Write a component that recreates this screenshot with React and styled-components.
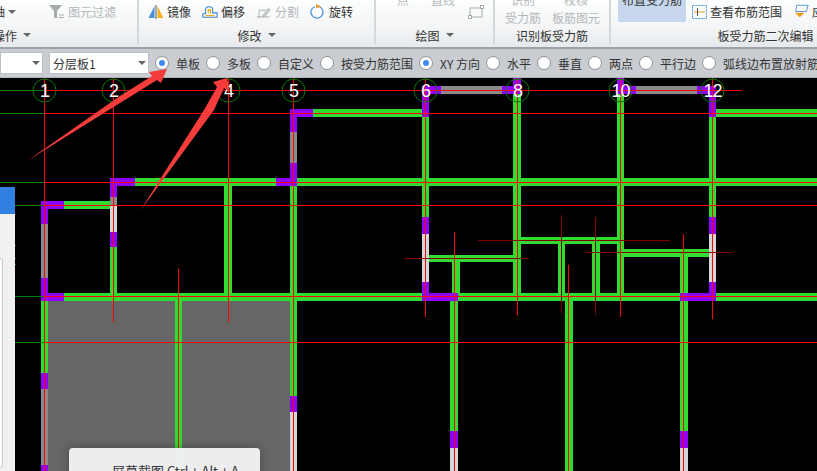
import React from 'react';
import styled, { createGlobalStyle } from 'styled-components';

const GREEN = '#2fdc2f';
const PURPLE = '#8f00ff';
const GRAY = '#8a8a8a';
const LIGHT = '#d6d6d6';
const RED = '#ff0000';
const DARKRED = '#800000';
const GRID = '#008000';

// [x, y, w, h, colour] in page coordinates
const walls = [
  [48, 301, 242, 170, '#666666'],
  // horizontal
  [110, 178, 707, 8, GREEN],
  [41, 293, 776, 8, GREEN],
  [63, 201, 48, 8, GREEN],
  [290, 109, 135, 8, GREEN],
  [716, 109, 101, 8, GREEN],
  [426, 255, 88, 7, GREEN],
  [513, 237, 108, 7, GREEN],
  [620, 249, 90, 8, GREEN],
  // axis 1
  [41, 201, 7, 23, PURPLE],
  [41, 224, 7, 54, GRAY],
  [41, 278, 7, 23, PURPLE],
  [41, 301, 7, 72, GREEN],
  [41, 373, 7, 16, PURPLE],
  [41, 389, 7, 76, GRAY],
  [41, 465, 7, 6, PURPLE],
  [41, 201, 23, 8, PURPLE],
  [41, 293, 23, 8, PURPLE],
  // axis 2
  [110, 197, 7, 8, GRAY],
  [110, 205, 7, 27, LIGHT],
  [110, 178, 7, 19, PURPLE],
  [110, 232, 7, 15, PURPLE],
  [110, 247, 7, 46, GREEN],
  [110, 178, 25, 8, PURPLE],
  // axis 3 and 4
  [175, 301, 7, 170, GREEN],
  [224, 186, 8, 107, GREEN],
  // axis 5
  [290, 109, 7, 23, PURPLE],
  [290, 132, 7, 31, GRAY],
  [290, 163, 7, 23, PURPLE],
  [290, 186, 7, 210, GREEN],
  [290, 396, 7, 16, PURPLE],
  [290, 412, 7, 59, LIGHT],
  [290, 109, 23, 8, PURPLE],
  [276, 178, 21, 8, PURPLE],
  // axis 6
  [422, 117, 7, 100, GREEN],
  [422, 86, 7, 31, PURPLE],
  [422, 217, 7, 17, PURPLE],
  [422, 234, 7, 48, LIGHT],
  [422, 282, 7, 19, PURPLE],
  [422, 293, 36, 8, PURPLE],
  [422, 86, 19, 8, PURPLE],
  [441, 86, 61, 8, GRAY],
  [502, 86, 19, 8, PURPLE],
  // stubs between 6 and 8
  [452, 258, 8, 35, GREEN],
  [450, 301, 8, 130, GREEN],
  [450, 431, 8, 17, PURPLE],
  [450, 448, 8, 23, LIGHT],
  // axis 8
  [513, 78, 8, 16, PURPLE],
  [513, 94, 8, 199, GREEN],
  [558, 237, 7, 56, GREEN],
  [592, 237, 8, 56, GREEN],
  [565, 301, 8, 170, GREEN],
  // axis 10
  [617, 78, 7, 16, PURPLE],
  [617, 94, 7, 199, GREEN],
  [617, 86, 19, 8, PURPLE],
  [636, 86, 61, 8, GRAY],
  [697, 86, 19, 8, PURPLE],
  [680, 252, 8, 41, GREEN],
  [680, 301, 8, 130, GREEN],
  [680, 431, 8, 17, PURPLE],
  [680, 448, 8, 23, LIGHT],
  // axis 12
  [709, 86, 7, 31, PURPLE],
  [709, 117, 7, 100, GREEN],
  [709, 217, 7, 17, PURPLE],
  [709, 234, 7, 48, LIGHT],
  [709, 282, 7, 19, PURPLE],
  [680, 293, 36, 8, PURPLE],
];

// [x1, y1, x2, y2, colour]
const lines = [
  [0, 90, 44, 90, GRID],
  [0, 113, 44, 113, GRID],
  [0, 182, 44, 182, GRID],
  [15, 205, 44, 205, GRID],
  [15, 296, 44, 296, GRID],
  [15, 342, 44, 342, GRID],
  [15, 245, 16, 245, GRID],
  [15, 258, 16, 258, GRID],
  [15, 264, 16, 264, GRID],
  [44, 90, 742, 90, RED],
  [44, 113, 817, 113, RED],
  [44, 182, 817, 182, RED],
  [44, 205, 817, 205, RED],
  [44, 296, 817, 296, RED],
  [44, 342, 817, 342, RED],
  [44, 78, 44, 471, RED],
  [113, 78, 113, 322, RED],
  [228, 78, 228, 322, RED],
  [293, 78, 293, 471, RED],
  [425, 78, 425, 317, RED],
  [517, 78, 517, 315, RED],
  [620, 78, 620, 317, RED],
  [712, 78, 712, 319, RED],
  [178, 269, 178, 471, RED],
  [454, 232, 454, 471, RED],
  [568, 265, 568, 471, RED],
  [683, 234, 683, 471, RED],
  [561, 215, 561, 313, DARKRED],
  [595, 218, 595, 315, DARKRED],
  [478, 240, 670, 240, DARKRED],
  [586, 252, 733, 252, DARKRED],
  [404, 258, 529, 258, DARKRED],
];

const axes = [
  [44.5, '1'], [113.5, '2'], [228.5, '4'], [293.5, '5'],
  [425.5, '6'], [517.5, '8'], [620.5, '10'], [712.5, '12'],
];

const options = [
  ['单板', true], ['多板'], ['自定义'], ['按受力筋范围'], ['XY 方向', true],
  ['水平'], ['垂直'], ['两点'], ['平行边'], ['弧线边布置放射筋'],
];

const Global = createGlobalStyle`
  html, body { margin: 0; padding: 0; background: #000; overflow: hidden; }
  #root { width: 817px; height: 471px; }
`;

const Page = styled.div`
  position: relative;
  width: 817px;
  height: 471px;
  display: flex;
  flex-direction: column;
  overflow: hidden;
  font-family: "Noto Sans CJK SC", "Liberation Sans", sans-serif;
  font-size: 12px;
  color: #333;
`;

const Ribbon = styled.div`
  flex: 0 0 47px;
  display: flex;
  overflow: hidden;
  background: linear-gradient(#fdfefe, #f3f5f6 60%, #e6e9ec);
  border-bottom: 2px solid #9ea2a7;
`;

const Group = styled.div`
  flex: 0 0 ${p => p.$width}px;
  box-sizing: border-box;
  display: flex;
  flex-direction: column;
  justify-content: flex-end;
  border-right: ${p => (p.$last ? 'none' : '2px solid #d5d8db')};
  margin-bottom: 3px;
`;

const Tools = styled.div`
  flex: 1;
  min-height: 0;
  box-sizing: border-box;
  display: flex;
  align-items: center;
  gap: ${p => p.$gap || 0}px;
  padding: 0 0 3px ${p => p.$pad || 0}px;
`;

const Tool = styled.div`
  flex: none;
  display: flex;
  align-items: center;
  justify-content: space-between;
  gap: ${p => p.$gap ?? 3}px;
  width: ${p => (p.$width ? `${p.$width}px` : 'auto')};
  margin-left: ${p => p.$left || 0}px;
  white-space: nowrap;
  line-height: 16px;
  color: ${p => (p.$off ? '#b4b7ba' : '#333')};
`;

const Stacked = styled.div`
  flex: none;
  width: ${p => p.$width}px;
  align-self: flex-end;
  margin-bottom: ${p => p.$lift}px;
  text-align: center;
  line-height: 18px;
  color: #b4b7ba;
  white-space: nowrap;
`;

const Selected = styled.div`
  flex: none;
  width: 68px;
  height: 23px;
  margin-top: -1px;
  align-self: flex-start;
  display: flex;
  justify-content: center;
  line-height: 12px;
  overflow: hidden;
  background: #c6d6ec;
  white-space: nowrap;
`;

const SelectedText = styled.span`
  margin-top: -5px;
`;

const GroupLabel = styled.div`
  height: 18px;
  line-height: 17px;
  display: flex;
  align-items: center;
  justify-content: ${p => (p.$start ? 'flex-start' : 'center')};
  gap: 6px;
  margin-left: ${p => p.$left || 0}px;
  white-space: nowrap;
`;

const Caret = styled.i`
  flex: none;
  width: 0;
  height: 0;
  border-left: 4px solid transparent;
  border-right: 4px solid transparent;
  border-top: 4px solid #666;
`;

const OptionBar = styled.div`
  flex: 0 0 29px;
  box-sizing: border-box;
  display: flex;
  align-items: center;
  background: #c9cdd2;
  border-bottom: 1px solid #b0b3b7;
  white-space: nowrap;
  overflow: hidden;
`;

const Select = styled.div`
  box-sizing: border-box;
  flex: 0 0 ${p => p.$width}px;
  height: 22px;
  margin-right: 6px;
  padding: 0 2px 0 3px;
  display: flex;
  align-items: center;
  justify-content: space-between;
  background: #fff;
  border: 1px solid #bdbfc2;
`;

const Option = styled.label`
  display: flex;
  align-items: center;
  gap: 7px;
  margin-right: 6px;
  flex: none;
`;

const Radio = styled.span`
  box-sizing: border-box;
  flex: none;
  width: 14px;
  height: 14px;
  border-radius: 50%;
  background: #fff;
  border: 1px solid #8f9296;
  display: flex;
  align-items: center;
  justify-content: center;

  &::after {
    content: '';
    display: ${p => (p.$on ? 'block' : 'none')};
    width: 6px;
    height: 6px;
    border-radius: 50%;
    background: #3b8cf2;
  }
`;

const Canvas = styled.div`
  position: relative;
  flex: 1;
  background: #000;
  overflow: hidden;
`;

const Drawing = styled.svg`
  display: block;
  width: 817px;
  height: 394px;
`;

const AxisLabel = styled.text`
  font-family: "Liberation Sans", sans-serif;
  font-size: 18px;
  letter-spacing: -1px;
  fill: #fff;
  text-anchor: middle;
`;

const SidePanel = styled.div`
  position: absolute;
  left: 0;
  top: 109px;
  bottom: 0;
  width: 15px;
  background: #f0f0f0;

  &::before {
    content: '';
    display: block;
    height: 27px;
    background: #2f80e0;
  }
  &::after {
    content: '';
    position: absolute;
    left: -1px;
    top: 71px;
    bottom: 3px;
    width: 2px;
    border: 1px solid #c8c8d2;
    border-radius: 0 2px 2px 0;
    background: #fff;
  }
`;

const Tip = styled.div`
  position: absolute;
  left: 69px;
  top: 370px;
  width: 191px;
  height: 60px;
  box-sizing: border-box;
  padding: 14px 0 0 43px;
  border-radius: 4px;
  background: rgba(242, 243, 245, 0.96);
  box-shadow: 0 0 10px rgba(0, 0, 0, 0.3);
  font-size: 13px;
  line-height: 18px;
  color: #333;
  white-space: nowrap;
`;

const Arrows = styled.svg`
  position: absolute;
  left: 0;
  top: 0;
  width: 817px;
  height: 471px;
  pointer-events: none;
`;

const FilterIcon = () => (
  <svg width="16" height="15" viewBox="0 0 16 15">
    <path d="M0 1h13L8 7v7H5V7z" fill="#a8abae" />
    <path d="M10 11h5M10 13.500h5" stroke="#a8abae" />
  </svg>
);

const MirrorIcon = () => (
  <svg width="16" height="14" viewBox="0 0 16 14">
    <path d="M6.500 1v12H0.500z" fill="#4a8fdc" />
    <path d="M9.500 1v12h6z" fill="#f5b21c" />
    <path d="M8 0v14" stroke="#555" />
  </svg>
);

const OffsetIcon = () => (
  <svg width="17" height="14" viewBox="0 0 18 14" fill="none">
    <path d="M1 13V9h3V4q0-3 4-3t4 3v4h5v5z" stroke="#3d86d8" strokeWidth="1.2" />
    <path d="M4 11h10M7 8V4.500h2.500V9" stroke="#f0a81e" strokeWidth="1.4" />
  </svg>
);

const SplitIcon = () => (
  <svg width="18" height="14" viewBox="0 0 18 14" fill="none" stroke="#a8abae">
    <path d="M1 12.500h14M3.500 5v9M3.500 5h8" />
    <path d="M7 12l7-9 2 1.500-7 8.500z" fill="#d0d2d4" />
  </svg>
);

const RotateIcon = () => (
  <svg width="15" height="15" viewBox="0 0 15 15" fill="none">
    <path d="M5 2.500a6 6 0 1 0 4 0" stroke="#4a8fdc" strokeWidth="1.300" />
    <path d="M6 0l5 2.200-5 2.300z" fill="#f09a20" />
  </svg>
);

const RectIcon = () => (
  <svg width="16" height="14" viewBox="0 0 16 14" fill="none">
    <rect x="2" y="3" width="12" height="9" stroke="#a8abae" />
    <rect x="0.500" y="10.500" width="3" height="3" fill="#fff" stroke="#a8abae" />
    <rect x="12.500" y="0.500" width="3" height="3" fill="#fff" stroke="#a8abae" />
  </svg>
);

const RangeIcon = () => (
  <svg width="15" height="14" viewBox="0 0 15 14" fill="none">
    <rect x="0.500" y="0.500" width="14" height="13" stroke="#4a8fdc" strokeDasharray="2 1" />
    <path d="M2 7h11" stroke="#f09a20" />
    <path d="M5.500 3v8" stroke="#555" />
  </svg>
);

const ApplyIcon = () => (
  <svg width="15" height="17" viewBox="0 0 17 17" fill="none">
    <path d="M3 1.500h13l-2 7H2z" stroke="#4a8fdc" />
    <path d="M1 10h11l-5.500 5z" fill="#f09a20" />
  </svg>
);

export default function App() {
  return (
    <Page>
      <Global />
      <Ribbon>
        <Group $width={139}>
          <Tools $gap={33}>
            <Tool $left={-7}>轴<Caret /></Tool>
            <Tool $off><FilterIcon />图元过滤</Tool>
          </Tools>
          <GroupLabel $start $left={-7}>操作<Caret /></GroupLabel>
        </Group>
        <Group $width={237}>
          <Tools $pad={9} $gap={11}>
            <Tool $width={43}><MirrorIcon />镜像</Tool>
            <Tool $width={43}><OffsetIcon />偏移</Tool>
            <Tool $width={43} $off><SplitIcon />分割</Tool>
            <Tool $width={43}><RotateIcon />旋转</Tool>
          </Tools>
          <GroupLabel>修改<Caret /></GroupLabel>
        </Group>
        <Group $width={119}>
          <Tools $gap={8} $pad={12}>
            <Stacked $width={30} $lift={14}>点</Stacked>
            <Stacked $width={34} $lift={14}>直线</Stacked>
            <RectIcon />
          </Tools>
          <GroupLabel>绘图<Caret /></GroupLabel>
        </Group>
        <Group $width={116}>
          <Tools $gap={6} $pad={6}>
            <Stacked $width={44} $lift={-4}>识别<br />受力筋</Stacked>
            <Stacked $width={50} $lift={-4}>校核<br />板筋图元</Stacked>
          </Tools>
          <GroupLabel>识别板受力筋</GroupLabel>
        </Group>
        <Group $width={206} $last>
          <Tools $gap={6} $pad={7}>
            <Selected><SelectedText>布置受力筋</SelectedText></Selected>
            <Tool><RangeIcon />查看布筋范围</Tool>
            <Tool $left={6}><ApplyIcon />应用</Tool>
          </Tools>
          <GroupLabel $left={84}>板受力筋二次编辑</GroupLabel>
        </Group>
      </Ribbon>

      <OptionBar>
        <Select $width={43}><span /><Caret /></Select>
        <Select $width={100}>分层板1<Caret /></Select>
        {options.map(([text, on]) => (
          <Option key={text}><Radio $on={on} />{text}</Option>
        ))}
      </OptionBar>

      <Canvas>
        <Drawing viewBox="0 78 817 394" shapeRendering="crispEdges">
          {walls.map(([x, y, w, h, c], i) => (
            <rect key={i} x={x} y={y} width={w} height={h} fill={c} />
          ))}
          {lines.map(([x1, y1, x2, y2, c], i) => (
            <rect
              key={i}
              x={x1}
              y={y1}
              width={Math.max(x2 - x1, 1)}
              height={Math.max(y2 - y1, 1)}
              fill={c}
            />
          ))}
          {axes.map(([x, label]) => (
            <g key={label} shapeRendering="auto">
              <circle cx={x} cy={90.5} r={11.5} fill="none" stroke="#0a7a0a" />
              <AxisLabel x={x} y={97}>{label}</AxisLabel>
            </g>
          ))}
        </Drawing>
        <SidePanel />
        <Tip>屏幕截图 Ctrl + Alt + A</Tip>
      </Canvas>

      <Arrows viewBox="0 0 817 471">
        <path d="M27 161L120 96 152 76 149 72 167 69 161 83 157 80 120 103z" fill="#f73c3c" />
        <path d="M140 211L204 110 217 87 213 82 227 78 230 92 224 88 214 110z" fill="#f73c3c" />
      </Arrows>
    </Page>
  );
}
